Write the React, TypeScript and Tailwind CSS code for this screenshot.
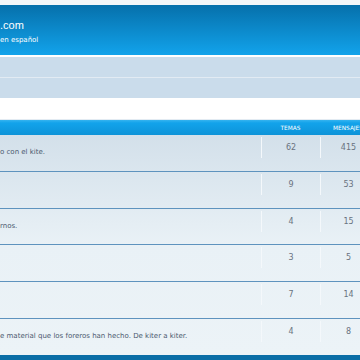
import React from 'react';

interface ForumRow {
  desc: string;
  topics: number;
  posts: number;
  h: string;
}

const rows: ForumRow[] = [
  { desc: 'o con el kite.', topics: 62, posts: 415, h: 'h-[36px]' },
  { desc: '', topics: 9, posts: 53, h: 'h-[37px] border-t border-[#5e93be]' },
  { desc: 'rnos.', topics: 4, posts: 15, h: 'h-[36px] border-t border-[#5e93be]' },
  { desc: '', topics: 3, posts: 5, h: 'h-[37px] border-t border-[#5e93be]' },
  { desc: '', topics: 7, posts: 14, h: 'h-[37px] border-t border-[#5e93be]' },
  { desc: 'e material que los foreros han hecho. De kiter a kiter.', topics: 4, posts: 8, h: 'h-[37px] border-t border-[#5e93be]' },
];

const App: React.FC = () => {
  return (
    <div className="w-[360px] h-[360px] overflow-hidden bg-white font-['DejaVu_Sans',sans-serif]">
      <div className="h-[5px] bg-[#f3f6f9]"></div>

      {/* headerbar */}
      <header className="h-[50px] bg-[linear-gradient(180deg,#0670ab,#12a3eb)] pt-[13px] text-white">
        <div className="text-[11px] leading-[15px] font-['Liberation_Sans',sans-serif] whitespace-nowrap">.com</div>
        <div className="text-[7px] leading-[9px] mt-[3px] whitespace-nowrap">en español</div>
      </header>
      <div className="h-[2px] bg-white"></div>

      {/* navbar */}
      <nav className="bg-[#cadceb]">
        <div className="h-[20px]"></div>
        <div className="h-px bg-[#e2ebf3]"></div>
        <div className="h-[20px]"></div>
      </nav>
      <div className="h-[22px] bg-white border-b border-[#e3ebf2]"></div>

      {/* forum list */}
      <div className="flex h-[15px] bg-[linear-gradient(180deg,#35b3ef,#12a3eb_20%,#0d93d8)] text-white text-[5.8px] leading-[13px] pt-[2px] uppercase">
        <div className="w-[261px] shrink-0"></div>
        <div className="w-[59px] shrink-0 text-center">Temas</div>
        <div className="w-[56px] shrink-0 text-center">Mensajes</div>
      </div>
      <div className="bg-[linear-gradient(180deg,#d3e0ea_0px,#e9f1f6_110px,#ecf3f7_220px)]">
        {rows.map((r, i) => (
          <div key={i} className={`flex ${r.h}`}>
            <div className="w-[261px] shrink-0 pt-[13px] text-[7px] leading-[8px] text-[#4c5a70] whitespace-nowrap">{r.desc}</div>
            <div className="w-[59px] shrink-0 mt-[2px] h-[21px] border-l border-[#f4f8fb] text-center text-[8px] leading-[10px] pt-[6px] text-[#69727f]">{r.topics}</div>
            <div className="w-[56px] shrink-0 mt-[2px] h-[21px] border-l border-[#f4f8fb] text-center text-[8px] leading-[10px] pt-[6px] text-[#69727f]">{r.posts}</div>
          </div>
        ))}
      </div>
      <div className="h-[6px] bg-[#0a6ea6]"></div>
    </div>
  );
};

export default App;
